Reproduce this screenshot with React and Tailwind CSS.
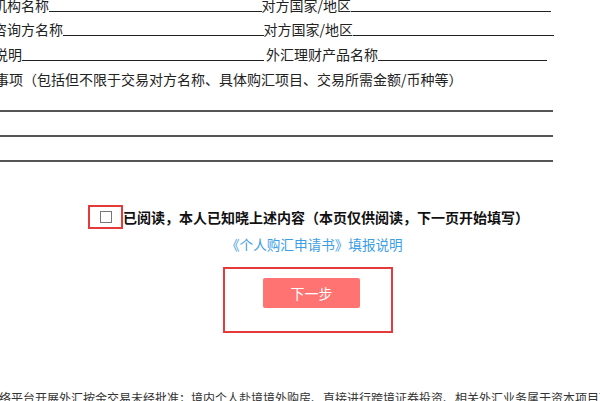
import React from "react";

const font = { fontFamily: '"Noto Sans CJK SC", sans-serif' };

function Label({ w, children }) {
  return (
    <div className={`flex justify-end whitespace-nowrap shrink-0 ${w}`}>
      <span className="leading-[14px]">{children}</span>
    </div>
  );
}

function Blank({ w }) {
  return <div className={`h-[14px] border-b border-[#222] shrink-0 ${w}`} />;
}

export default function App() {
  return (
    <div
      className="w-[600px] h-[401px] overflow-hidden bg-white text-[#222] text-[14px] flex flex-col [&>*]:shrink-0"
      style={font}
    >
      {/* form rows */}
      <div className="flex items-end h-[13px] -mt-[1px]">
        <Label w="w-[49px]">境外机构名称</Label>
        <Blank w="w-[213px]" />
        <Label w="w-[89px]">对方国家/地区</Label>
        <Blank w="w-[200px]" />
      </div>
      <div className="flex items-end h-[24px]">
        <Label w="w-[63px]">境外咨询方名称</Label>
        <Blank w="w-[201px]" />
        <Label w="w-[89px]">对方国家/地区</Label>
        <Blank w="w-[201px]" />
      </div>
      <div className="flex items-end h-[25px]">
        <Label w="w-[22px]">用途说明</Label>
        <Blank w="w-[242px]" />
        <div className="w-[2px] shrink-0" />
        <Label w="w-[112px]">外汇理财产品名称</Label>
        <Blank w="w-[169px]" />
      </div>
      <div className="flex h-[20px] mt-[8px] whitespace-nowrap leading-[20px] -ml-[33px]">
        其他事项（包括但不限于交易对方名称、具体购汇项目、交易所需金额/币种等）
      </div>

      {/* blank lines */}
      <div className="w-[553px] h-[2px] bg-[#555] mt-[21px]" />
      <div className="w-[553px] h-[2px] bg-[#555] mt-[23px]" />
      <div className="w-[553px] h-[2px] bg-[#555] mt-[23px]" />

      {/* agreement */}
      <div className="flex items-center mt-[43px] ml-[88px]">
        <div className="w-[35px] h-[24px] border-2 border-[#e53a3b] flex items-center justify-center shrink-0">
          <div className="w-[12px] h-[12px] border border-[#777] bg-white ml-[1px]" />
        </div>
        <span className="font-bold text-[14px] leading-[20px] whitespace-nowrap text-[#111]">
          已阅读，本人已知晓上述内容（本页仅供阅读，下一页开始填写）
        </span>
      </div>
      <div className="mt-[5px] ml-[226px] text-[13.6px] leading-[20px] text-[#3c9ee5] whitespace-nowrap">
        《个人购汇申请书》填报说明
      </div>

      {/* next button */}
      <div className="mt-[13px] ml-[223px] w-[170px] h-[66px] border-2 border-[#e53a3b] pt-[9px] pl-[38px]">
        <button className="w-[97px] h-[30px] bg-[#ff7472] rounded-[2px] text-white text-[14px] flex items-center justify-center">
          下一步
        </button>
      </div>

      {/* bottom notice */}
      <div className="mt-[57px] -ml-[13px] text-[12px] leading-[16px] whitespace-nowrap text-[#333]">
        网络平台开展外汇按金交易未经批准；境内个人赴境境外购房、直接进行跨境证券投资、相关外汇业务属于资本项目下
      </div>
    </div>
  );
}
